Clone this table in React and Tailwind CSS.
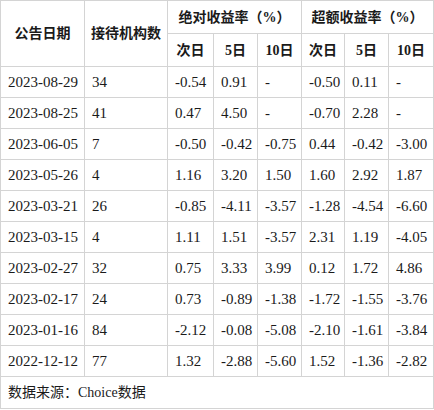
const rows = [
  ['2023-08-29', '34', '-0.54', '0.91', '-', '-0.50', '0.11', '-'],
  ['2023-08-25', '41', '0.47', '4.50', '-', '-0.70', '2.28', '-'],
  ['2023-06-05', '7', '-0.50', '-0.42', '-0.75', '0.44', '-0.42', '-3.00'],
  ['2023-05-26', '4', '1.16', '3.20', '1.50', '1.60', '2.92', '1.87'],
  ['2023-03-21', '26', '-0.85', '-4.11', '-3.57', '-1.28', '-4.54', '-6.60'],
  ['2023-03-15', '4', '1.11', '1.51', '-3.57', '2.31', '1.19', '-4.05'],
  ['2023-02-27', '32', '0.75', '3.33', '3.99', '0.12', '1.72', '4.86'],
  ['2023-02-17', '24', '0.73', '-0.89', '-1.38', '-1.72', '-1.55', '-3.76'],
  ['2023-01-16', '84', '-2.12', '-0.08', '-5.08', '-2.10', '-1.61', '-3.84'],
  ['2022-12-12', '77', '1.32', '-2.88', '-5.60', '1.52', '-1.36', '-2.82'],
]

const widths = ['w-[84px]', 'w-[83px]', 'w-[46px]', 'w-[44px]', 'w-[44px]', 'w-[43px]', 'w-[44px]', 'w-[45px]']

const App = () => {
  const cell = 'border border-[#d4d4d4] px-0'
  const th = cell + ' text-center font-bold text-[14px] h-[33px] p-0'
  return (
    <div className="w-[434px] h-[410px] bg-white text-[#1a1a1a] font-['Liberation_Serif','Noto_Sans_CJK_SC',serif]">
      <table className="table-fixed border-collapse w-[434px]">
        <colgroup>
          {widths.map((w, i) => <col key={i} className={w} />)}
        </colgroup>
        <thead>
          <tr>
            <th rowSpan={2} className={th}>公告日期</th>
            <th rowSpan={2} className={th}>接待机构数</th>
            <th colSpan={3} className={th}>绝对收益率（%）</th>
            <th colSpan={3} className={th}>超额收益率（%）</th>
          </tr>
          <tr>
            <th className={th}>次日</th>
            <th className={th}>5日</th>
            <th className={th}>10日</th>
            <th className={th}>次日</th>
            <th className={th}>5日</th>
            <th className={th}>10日</th>
          </tr>
        </thead>
        <tbody>
          {rows.map((r) => (
            <tr key={r[0]} className="h-[31px]">
              {r.map((v, i) => (
                <td key={i} className={cell + ' text-[15px] pl-[7px] text-left whitespace-nowrap'}>{v}</td>
              ))}
            </tr>
          ))}
          <tr className="h-[32px]">
            <td colSpan={8} className={cell + ' text-[14px] pl-[7px] text-left'}>数据来源：Choice数据</td>
          </tr>
        </tbody>
      </table>
    </div>
  )
}

export default App
